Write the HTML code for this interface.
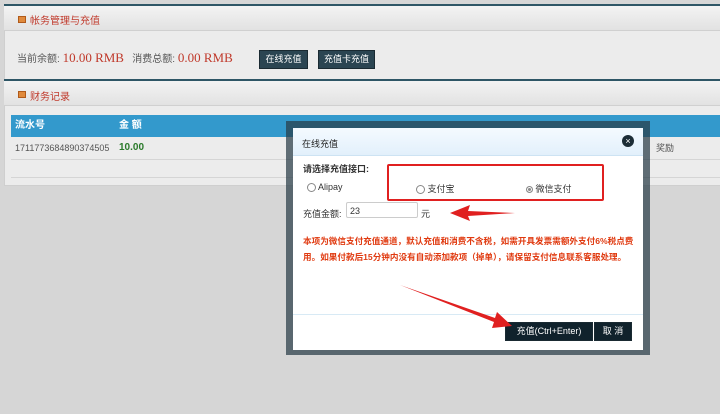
<!DOCTYPE html>
<html><head><meta charset="utf-8"><style>
body{margin:0;width:720px;height:414px;background:#d6d6d6;font-family:"Liberation Sans","Noto Sans CJK SC",sans-serif;position:relative;overflow:hidden;font-size:9px;color:#333}
.a{position:absolute}
.panel{left:4px;top:4px;width:716px;height:180px;background:#ececec;border:1px solid #cfcfcf}
.hd{background:linear-gradient(#f3f3f3,#e2e2e2);border-top:2px solid #2e5666;height:24px;border-bottom:1px solid #d0d0d0}
.hd span{position:absolute;left:26px;color:#c0392b;font-size:10px}
.ic{position:absolute;left:14px;width:6px;height:5px;background:#e08a3c;border:1px solid #b05a1a}
.btn{background:#2b4552;color:#fff;border:1px solid #1a2a32;font-size:9px;text-align:center;line-height:17px}
</style></head><body>
<div class="a panel"></div>
<div class="a hd" style="left:4px;top:4px;width:716px"><div class="ic" style="top:10px"></div><span style="top:6px">帐务管理与充值</span></div>
<div class="a" style="left:17px;top:50px;color:#555;font-size:10px">当前余额: <span style="color:#c0392b;font-family:'Liberation Serif',serif;font-size:13px">10.00 RMB</span>&nbsp;&nbsp; 消费总额: <span style="color:#c0392b;font-family:'Liberation Serif',serif;font-size:13px">0.00 RMB</span></div>
<div class="a btn" style="left:259px;top:50px;width:47px">在线充值</div>
<div class="a btn" style="left:318px;top:50px;width:55px">充值卡充值</div>
<div class="a hd" style="left:4px;top:79px;width:716px"><div class="ic" style="top:10px"></div><span style="top:7px">财务记录</span></div>
<div class="a" style="left:11px;top:115px;width:709px;height:22px;background:#3399cc;color:#fff;font-weight:bold;font-size:10px;line-height:22px"><span style="margin-left:4px">流水号</span><span style="position:absolute;left:108px">金 额</span></div>
<div class="a" style="left:11px;top:137px;width:709px;height:22px;border-bottom:1px solid #d5d5d5;line-height:22px"><span style="margin-left:4px;color:#555">1711773684890374505</span><span style="position:absolute;left:108px;color:#2a7a2a;font-weight:bold;font-size:10px">10.00</span><span style="position:absolute;left:645px;color:#555">奖励</span></div>
<div class="a" style="left:11px;top:177px;width:709px;border-bottom:1px solid #d5d5d5"></div>
<div class="a" style="left:286px;top:121px;width:364px;height:234px;background:rgba(40,60,70,0.72)"></div>
<div class="a" style="left:293px;top:128px;width:350px;height:222px;background:#fff"></div>
<div class="a" style="left:293px;top:128px;width:350px;height:27px;background:linear-gradient(#f4faff,#e2f0fb);border-bottom:1px solid #cde3f3"></div>
<div class="a" style="left:302px;top:137px;font-size:9px;color:#222">在线充值</div>
<div class="a" style="left:622px;top:135px;width:12px;height:12px;border-radius:50%;background:#1d2d36;color:#fff;font-size:9px;line-height:12px;text-align:center">×</div>
<div class="a" style="left:303px;top:162px;font-weight:bold">请选择充值接口:</div>
<div class="a" style="left:307px;top:182px"><span style="display:inline-block;width:7px;height:7px;border:1px solid #888;border-radius:50%;vertical-align:middle"></span> Alipay</div>
<div class="a" style="left:416px;top:182px"><span style="display:inline-block;width:7px;height:7px;border:1px solid #888;border-radius:50%;vertical-align:middle"></span> 支付宝</div>
<div class="a" style="left:526px;top:182px"><span style="display:inline-block;width:5px;height:5px;border:1px solid #888;border-radius:50%;vertical-align:middle;background:#888;box-shadow:inset 0 0 0 1px #fff;padding:0"></span> 微信支付</div>
<div class="a" style="left:387px;top:164px;width:213px;height:33px;border:2px solid #e02020;border-radius:2px"></div>
<div class="a" style="left:303px;top:207px">充值金额:</div>
<div class="a" style="left:346px;top:202px;height:16px;border:1px solid #ccc;border-radius:2px;line-height:16px;padding-left:3px;box-sizing:border-box;width:72px">23</div>
<div class="a" style="left:421px;top:207px">元</div>
<div class="a" style="left:303px;top:233px;white-space:nowrap;color:#e03a10;font-weight:bold;font-size:8.6px;line-height:16px">本项为微信支付充值通道，默认充值和消费不含税，如需开具发票需额外支付6%税点费<br>用。如果付款后15分钟内没有自动添加款项（掉单），请保留支付信息联系客服处理。</div>
<div class="a" style="left:293px;top:314px;width:350px;border-top:1px solid #d8eaf5"></div>
<div class="a btn" style="left:505px;top:322px;width:86px;background:#10222c">充值(Ctrl+Enter)</div>
<div class="a btn" style="left:594px;top:322px;width:36px;background:#10222c">取 消</div>
<svg class="a" style="left:0;top:0" width="720" height="414"><polygon points="450,213 470,205 468,211 515,213 468,216 470,221" fill="#e02020"/><polygon points="400,285 495,318 497,312 512,326 492,328 494,322" fill="#e02020"/></svg>
</body></html>
